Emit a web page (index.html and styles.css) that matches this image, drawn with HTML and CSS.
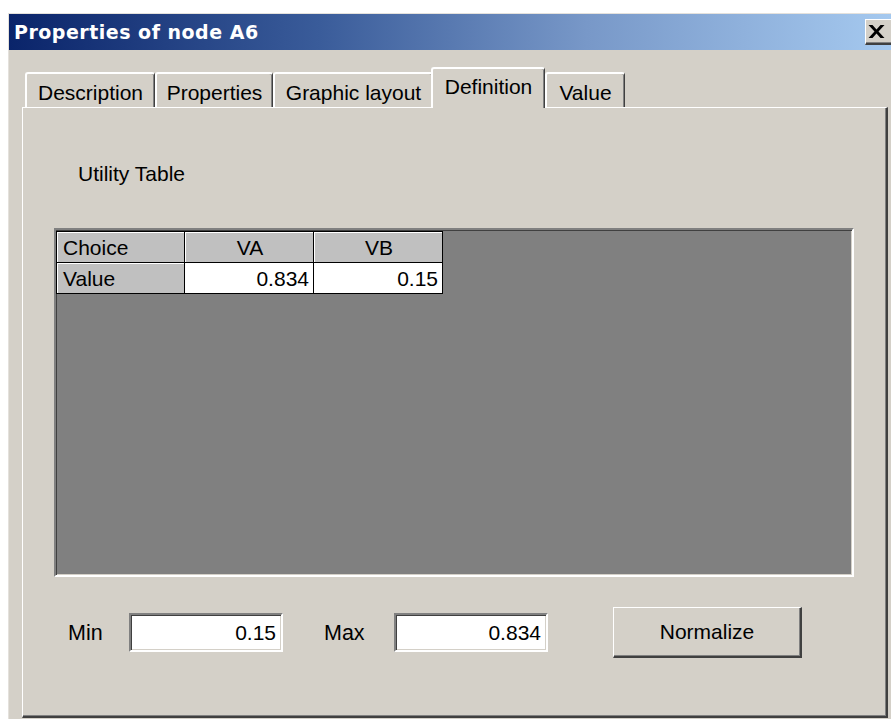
FILE: index.html
```html
<!DOCTYPE html>
<html lang="en">
<head>
<meta charset="utf-8">
<title>Properties of node A6</title>
<link rel="stylesheet" href="styles.css">
</head>
<body>
<div class="window">
  <div class="titlebar">
    <span class="title">Properties of node A6</span>
    <button class="close" type="button" aria-label="Close">
      <svg width="17" height="13" viewBox="0 0 17 13" aria-hidden="true">
        <path d="M0.5 0h4l4 4.6 4-4.6h4l-6 6.5 6 6.5h-4l-4-4.6-4 4.6h-4l6-6.5z" fill="#000"/>
      </svg>
    </button>
  </div>
  <div class="client">
    <div class="tabs">
      <div class="tab tab-description">Description</div>
      <div class="tab tab-properties">Properties</div>
      <div class="tab tab-graphic">Graphic layout</div>
      <div class="tab tab-definition active">Definition</div>
      <div class="tab tab-value">Value</div>
    </div>
    <div class="panel">
      <div class="caption">Utility Table</div>
      <div class="grid-view">
        <table class="grid">
          <tr>
            <th class="head first">Choice</th>
            <th class="head">VA</th>
            <th class="head">VB</th>
          </tr>
          <tr>
            <th class="head first">Value</th>
            <td class="num">0.834</td>
            <td class="num">0.15</td>
          </tr>
        </table>
      </div>
      <div class="controls">
        <span class="label label-min">Min</span>
        <div class="field">0.15</div>
        <span class="label label-max">Max</span>
        <div class="field">0.834</div>
        <button class="push" type="button">Normalize</button>
      </div>
    </div>
  </div>
</div>
</body>
</html>
```
FILE: styles.css
```css
html, body {
  margin: 0;
  padding: 0;
  background: #ffffff;
  overflow: hidden;
}

body {
  width: 891px;
  height: 719px;
  font-family: "Liberation Sans", Arial, sans-serif;
  font-size: 21px;
  color: #000;
}

/* dialog frame */
.window {
  box-sizing: border-box;
  margin: 13px 0 0 8px;
  width: 890px;
  height: 706px;
  background: #d4d0c8;
  border-top: 1px solid #e4e1dc;
  border-left: 1px solid #e4e1dc;
  display: flex;
  flex-direction: column;
}

.titlebar {
  height: 36px;
  flex: none;
  display: flex;
  align-items: center;
  justify-content: space-between;
  padding: 0 0 0 5px;
  background: linear-gradient(to right, #0a246a 0%, #3a5c9a 35%, #7898c8 65%, #a6caf0 100%);
}

.title {
  font-family: "DejaVu Sans", Verdana, sans-serif;
  font-weight: bold;
  font-size: 19px;
  letter-spacing: 0.5px;
  color: #ffffff;
  white-space: nowrap;
}

.close {
  box-sizing: border-box;
  width: 33px;
  height: 26px;
  padding: 0 0 1px 2px;
  margin: 0;
  display: flex;
  align-items: center;
  justify-content: flex-start;
  background: #d4d0c8;
  border-style: solid;
  border-width: 1px 2px 2px 1px;
  border-color: #ffffff #404040 #404040 #ffffff;
  box-shadow: inset -1px -1px 0 #808080;
}

.client {
  flex: 1;
  padding: 17px 10px 0 13px;
  display: flex;
  flex-direction: column;
}

/* tab strip */
.tabs {
  height: 40px;
  display: flex;
  align-items: flex-end;
  padding-left: 3px;
}

.tab {
  box-sizing: border-box;
  height: 35px;
  padding-top: 7px;
  line-height: 24px;
  text-align: center;
  white-space: nowrap;
  background: #d4d0c8;
  border-style: solid;
  border-width: 2px 1px 0 2px;
  border-color: #ffffff #404040 #ffffff #ffffff;
  border-radius: 3px 3px 0 0;
  box-shadow: inset -1px 0 0 #808080;
}

.tab-description { width: 130px; }
.tab-properties { width: 118px; }
.tab-graphic { width: 160px; }
.tab-definition { width: 114px; margin-left: -2px; }
.tab-value { width: 80px; }

.tab.active {
  height: 41px;
  margin-bottom: -1px;
  padding-top: 6px;
  position: relative;
  z-index: 1;
}

/* property page */
.panel {
  box-sizing: border-box;
  height: 611px;
  background: #d4d0c8;
  border-style: solid;
  border-width: 1px 2px 2px 1px;
  border-color: #ffffff #404040 #404040 #ffffff;
  box-shadow: inset -1px -1px 0 #808080;
  padding: 0 0 0 31px;
  display: flex;
  flex-direction: column;
}

.caption {
  margin: 54px 0 0 24px;
  line-height: 24px;
}

.grid-view {
  box-sizing: border-box;
  margin-top: 42px;
  width: 800px;
  height: 349px;
  background: #808080;
  border-style: solid;
  border-width: 2px;
  border-color: #808080 #ffffff #ffffff #808080;
  box-shadow: inset 1px 1px 0 #404040, inset -1px -1px 0 #d4d0c8;
  padding: 1px 0 0 0;
}

.grid {
  border-collapse: collapse;
}

.grid th,
.grid td {
  box-sizing: border-box;
  height: 31px;
  padding: 0 4px 0 6px;
  border: 1px solid #000;
  font-weight: normal;
  line-height: 29px;
  white-space: nowrap;
}

.grid .head {
  width: 129px;
  background: #c0c0c0;
  text-align: center;
  box-shadow: inset 1px 1px 0 #ffffff;
}

.grid .head.first {
  width: 128px;
  text-align: left;
}

.grid .num {
  width: 129px;
  background: #ffffff;
  text-align: right;
}

/* bottom row */
.controls {
  margin-top: 30px;
  height: 51px;
  display: flex;
  align-items: center;
}

.label {
  font-size: 21.5px;
  line-height: 24px;
}

.label-min {
  margin-left: 14px;
  width: 61px;
}

.label-max {
  margin-left: 41px;
  width: 70px;
}

.field {
  box-sizing: border-box;
  width: 154px;
  height: 39px;
  padding: 0 5px 0 0;
  line-height: 35px;
  text-align: right;
  background: #ffffff;
  border-style: solid;
  border-width: 2px;
  border-color: #808080 #ffffff #ffffff #808080;
  box-shadow: inset 1px 1px 0 #404040, inset -1px -1px 0 #d4d0c8;
}

.push {
  box-sizing: border-box;
  margin-left: 65px;
  width: 189px;
  height: 51px;
  padding: 0;
  font-family: "Liberation Sans", Arial, sans-serif;
  font-size: 21px;
  color: #000;
  background: #d4d0c8;
  border-style: solid;
  border-width: 1px 2px 2px 1px;
  border-color: #ffffff #404040 #404040 #ffffff;
  box-shadow: inset -1px -1px 0 #808080;
}
```
